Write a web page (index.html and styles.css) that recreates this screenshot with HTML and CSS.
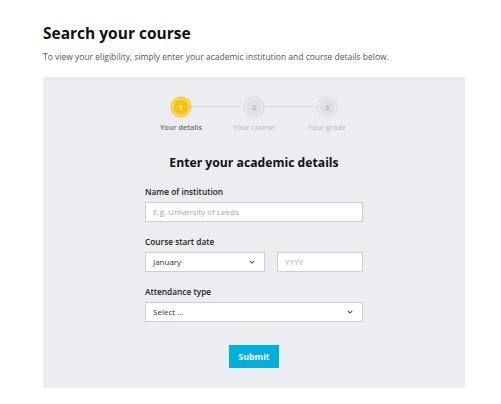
FILE: index.html
```html
<!DOCTYPE html>
<html lang="en">
<head>
<meta charset="utf-8">
<title>Search your course</title>
<link rel="stylesheet" href="styles.css">
</head>
<body>
<main class="page">
  <h1 class="title">Search your course</h1>
  <p class="intro">To view your eligibility, simply enter your academic institution and course details below.</p>
  <section class="panel">
    <ol class="stepper">
      <li class="step active"><span class="dot">1</span><span class="step-label">Your details</span></li>
      <li class="step"><span class="dot">2</span><span class="step-label">Your course</span></li>
      <li class="step"><span class="dot">3</span><span class="step-label">Your grade</span></li>
    </ol>
    <h2 class="form-title">Enter your academic details</h2>
    <form class="form">
      <label class="field-label">Name of institution</label>
      <div class="input placeholder">E.g. University of Leeds</div>

      <label class="field-label">Course start date</label>
      <div class="row">
        <div class="input select month">January<svg class="chev" viewBox="0 0 8 5" width="6" height="4"><path d="M1 1l3 3 3-3" fill="none" stroke="#555" stroke-width="1.4"/></svg></div>
        <div class="input placeholder year">YYYY</div>
      </div>

      <label class="field-label">Attendance type</label>
      <div class="input select">Select ...<svg class="chev" viewBox="0 0 8 5" width="6" height="4"><path d="M1 1l3 3 3-3" fill="none" stroke="#555" stroke-width="1.4"/></svg></div>

      <div class="actions"><button type="button" class="submit">Submit</button></div>
    </form>
  </section>
</main>
</body>
</html>
```
FILE: styles.css
```css
* { box-sizing: border-box; }
html, body { margin: 0; padding: 0; background: #fff; }
body { font-family: "Open Sans", "Noto Sans", sans-serif; color: #1d1d1f; }
.page { width: 422px; margin-left: 43px; padding-top: 22px; }
.title { margin: 0; font-size: 15.5px; font-weight: 700; line-height: 22px; color: #111; }
.intro { margin: 7px 0 0; font-size: 8.5px; line-height: 12px; color: #555; }
.panel { margin-top: 14px; background: #ecedf1; height: 311px; padding-top: 19px; }
.stepper { list-style: none; margin: 0 auto; padding: 0; display: flex; justify-content: center; width: 220px; position: relative; }
.step { width: 73px; display: flex; flex-direction: column; align-items: center; position: relative; }
.step + .step::before { content: ""; position: absolute; top: 10px; right: 50%; width: 73px; height: 1px; background: #d6d7db; z-index: 0; }
.dot { position: relative; z-index: 1; width: 16px; height: 16px; margin: 3px; border-radius: 50%; background: #dfe0e3; color: #b9babd; font-size: 7.8px; font-weight: 700; display: flex; align-items: center; justify-content: center; box-shadow: 0 0 0 1px #f5f5f7, 0 0 0 2.5px #dcdde0; }
.active .dot { background: #fdc010; color: #fff; box-shadow: 0 0 0 1px #fff2c6, 0 0 0 2.5px #fdc62a; }
.step-label { margin-top: 4px; font-size: 7.3px; font-weight: 600; color: #c4c5c8; white-space: nowrap; line-height: 11px; }
.active .step-label { color: #6d6e72; }
.form-title { margin: 21px 0 0; text-align: center; font-size: 12.2px; font-weight: 700; line-height: 18px; color: #111; }
.form { width: 218px; margin: 14px auto 0; display: flex; flex-direction: column; }
.field-label { font-size: 8.3px; font-weight: 600; color: #222; line-height: 11px; margin-bottom: 5px; }
.input { height: 20px; background: #fff; border: 1px solid #cdced2; font-size: 8px; line-height: 18px; padding: 0 7px; color: #333; display: flex; align-items: center; justify-content: space-between; margin-bottom: 14px; }
.placeholder { color: #a6a7aa; }
.row { display: flex; gap: 12px; }
.month { width: 120px; }
.year { width: 86px; }
.chev { margin-right: 2px; }
.actions { display: flex; justify-content: center; margin-top: 9px; }
.submit { width: 50px; height: 23px; border: 0; background: #00b0dc; color: #fff; font-family: inherit; font-size: 8.8px; font-weight: 700; padding: 0; }
```
